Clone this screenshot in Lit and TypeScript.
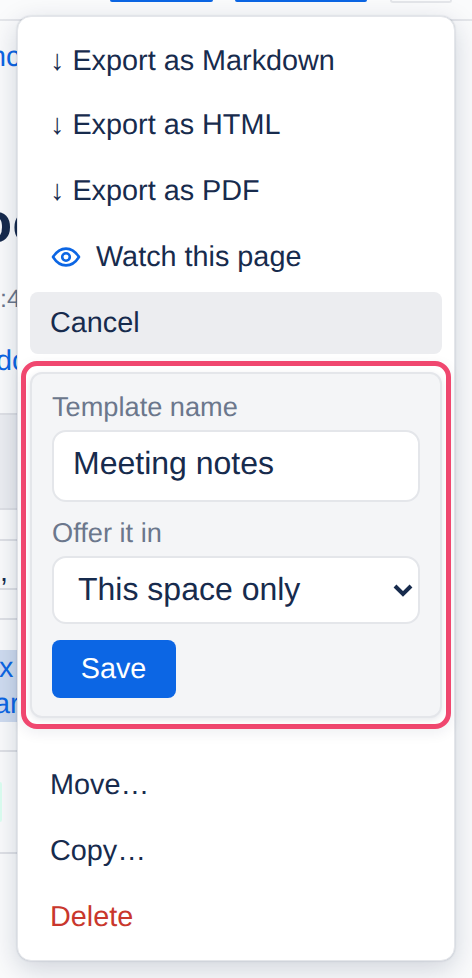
import { LitElement, html, css } from "lit";
import { customElement } from "lit/decorators.js";

@customElement("app-root")
export class AppRoot extends LitElement {
  static styles = css`
    :host {
      display: block;
      width: 472px;
      height: 978px;
      position: relative;
      overflow: hidden;
      background: #fafbfc;
      font-family: "Liberation Sans", Arial, sans-serif;
      color: #172b4d;
      text-rendering: geometricPrecision;
    }
    * { box-sizing: border-box; }
    .topbar {
      height: 21px;
      border-bottom: 2px solid #e4e6ea;
      display: flex;
      align-items: flex-start;
      padding-left: 110px;
      gap: 22px;
    }
    .tb { height: 2px; background: #0c66e4; border-radius: 0 0 6px 6px; }
    .tb.a { width: 103px; }
    .tb.b { width: 132px; }
    .tb.c { width: 62px; height: 3px; background: transparent; margin-left: 1px;
      border: 2px solid #e4e6ea; border-top: 0; border-radius: 0 0 8px 8px; }
    .bg { width: 17px; overflow: hidden; white-space: nowrap; }
    .frag { display: flex; overflow: hidden; }
    .link { color: #0c66e4; font-size: 28.8px; line-height: 32px; }
    .f1 { margin-top: 20px; }
    .f1 span { margin-left: -10px; }
    .title { margin-top: 125px; font-size: 56px; font-weight: 700; line-height: 50px; }
    .title span { margin-left: -22px; }
    .time { margin-top: 37px; font-size: 25px; line-height: 28px; color: #6b778c; }
    .f2 { margin-top: 32px; }
    .f2 span { margin-left: -4px; }
    .shade { margin-top: 36px; height: 97px; background: #eceef2; border-top: 2px solid #dfe1e6; border-bottom: 2px solid #dfe1e6; }
    .row { height: 31px; border-bottom: 2px solid #dfe1e6; }
    .comma { height: 49px; padding-top: 15px; border-bottom: 2px solid #dfe1e6; font-size: 28.8px; line-height: 32px; }
    .l { height: 2px; background: #dfe1e6; }
    .l1 { margin-top: 28px; }
    .hl { margin-top: 30px; height: 72px; background: #cfdcf0; color: #0c66e4; font-size: 28.8px; line-height: 36px; overflow: hidden; }
    .hl span { display: block; }
    .hl .x { margin-left: -1px; }
    .hl .ar { margin-left: -6px; }
    .l2 { margin-top: 28px; }
    .tag { margin-top: 30px; width: 2px; height: 40px; background: #dcfff1; border-radius: 0 6px 6px 0; }
    .l3 { margin-top: 30px; }

    .menu {
      position: absolute;
      left: 17px;
      top: 16px;
      width: 438px;
      height: 945px;
      background: #fff;
      border: 1px solid #e4e6ea;
      border-radius: 14px;
      padding: 13px 12px 12px;
      display: flex;
      flex-direction: column;
      gap: 4px;
      box-shadow: 0 8px 28px rgba(9, 30, 66, 0.18), 0 0 2px rgba(9, 30, 66, 0.2);
    }
    .item {
      height: 62px;
      padding: 0 20px;
      border-radius: 8px;
      font-size: 28.8px;
      line-height: 62px;
      display: flex;
      align-items: center;
      white-space: pre;
      flex: none;
    }
    .item.first { height: 60px; line-height: 62px; align-items: flex-start; }
    .item.cancel { background: #ecedf0; }
    .item.del { color: #c9372c; }
    .eye { width: 30px; height: 24px; margin-left: 1px; margin-right: 15px; flex: none; }
    .ring {
      flex: none;
      margin: 3px -9px 21px;
      padding: 6px 4px;
      border: 5px solid #f0476f;
      border-radius: 16px;
      box-shadow: 0 4px 14px rgba(9, 30, 66, 0.07);
    }
    .form {
      height: 346px;
      background: #f4f5f7;
      border: 2px solid #e4e6ea;
      border-radius: 12px;
      padding: 17px 20px;
      display: flex;
      flex-direction: column;
      box-shadow: 0 2px 6px rgba(9, 30, 66, 0.1);
    }
    label { font-size: 27.2px; line-height: 32px; color: #6b778c; display: block; }
    .input, select {
      width: 368px;
      background: #fff;
      border: 2px solid #e4e6ea;
      border-radius: 14px;
      color: #172b4d;
      font-family: inherit;
      font-size: 32px;
      text-rendering: geometricPrecision;
    }
    .input { height: 72px; margin-top: 7px; padding: 0 19px 6px; margin-bottom: 15px; display: block; }
    .selwrap { position: relative; width: 368px; height: 68px; margin-top: 7px; margin-bottom: 16px; }
    select { height: 68px; padding: 0 24px 2px; appearance: none; -webkit-appearance: none; display: block; }
    .chev { position: absolute; right: 7px; top: 27px; width: 20px; height: 14px; pointer-events: none; }
    .save {
      width: 124px;
      height: 58px;
      border: 0;
      border-radius: 8px;
      background: #0c66e4;
      color: #fff;
      font-family: inherit;
      font-size: 28.8px;
      text-rendering: geometricPrecision;
      padding: 0 1px 0 0;
    }
  `;

  render() {
    return html`
      <div class="topbar">
        <div class="tb a"></div><div class="tb b"></div><div class="tb c"></div>
      </div>
      <div class="bg">
        <div class="frag link f1"><span>nc</span></div>
        <div class="frag title"><span>oc</span></div>
        <div class="frag time"><span>:4</span></div>
        <div class="frag link f2"><span>do</span></div>
        <div class="shade"></div>
        <div class="row"></div>
        <div class="comma">,</div>
        <div class="l l1"></div>
        <div class="hl"><span class="x">x</span><span class="ar">ar</span></div>
        <div class="l l2"></div>
        <div class="tag"></div>
        <div class="l l3"></div>
      </div>
      <div class="menu">
        <div class="item first">↓ Export as Markdown</div>
        <div class="item">↓ Export as HTML</div>
        <div class="item">↓ Export as PDF</div>
        <div class="item"><svg class="eye" viewBox="0 0 30 24" fill="none" stroke="#0c66e4" stroke-width="2.6">
            <path d="M2 12C5.5 6.5 10 3.6 15 3.6S24.500 6.500 28 12C24.500 17.500 20 20.400 15 20.400S5.500 17.500 2 12Z" stroke-linejoin="round"/>
            <circle cx="15" cy="12" r="3.800"/>
          </svg>Watch this page</div>
        <div class="item cancel">Cancel</div>
        <div class="ring">
          <div class="form">
            <label>Template name</label>
            <input class="input" .value=${"Meeting notes"} />
            <label>Offer it in</label>
            <div class="selwrap">
              <select><option>This space only</option></select>
              <svg class="chev" viewBox="0 0 20 14" fill="none" stroke="#172b4d" stroke-width="4"><path d="M2 3l8 8 8-8"/></svg>
            </div>
            <button class="save">Save</button>
          </div>
        </div>
        <div class="item">Move…</div>
        <div class="item">Copy…</div>
        <div class="item del">Delete</div>
      </div>
    `;
  }
}
